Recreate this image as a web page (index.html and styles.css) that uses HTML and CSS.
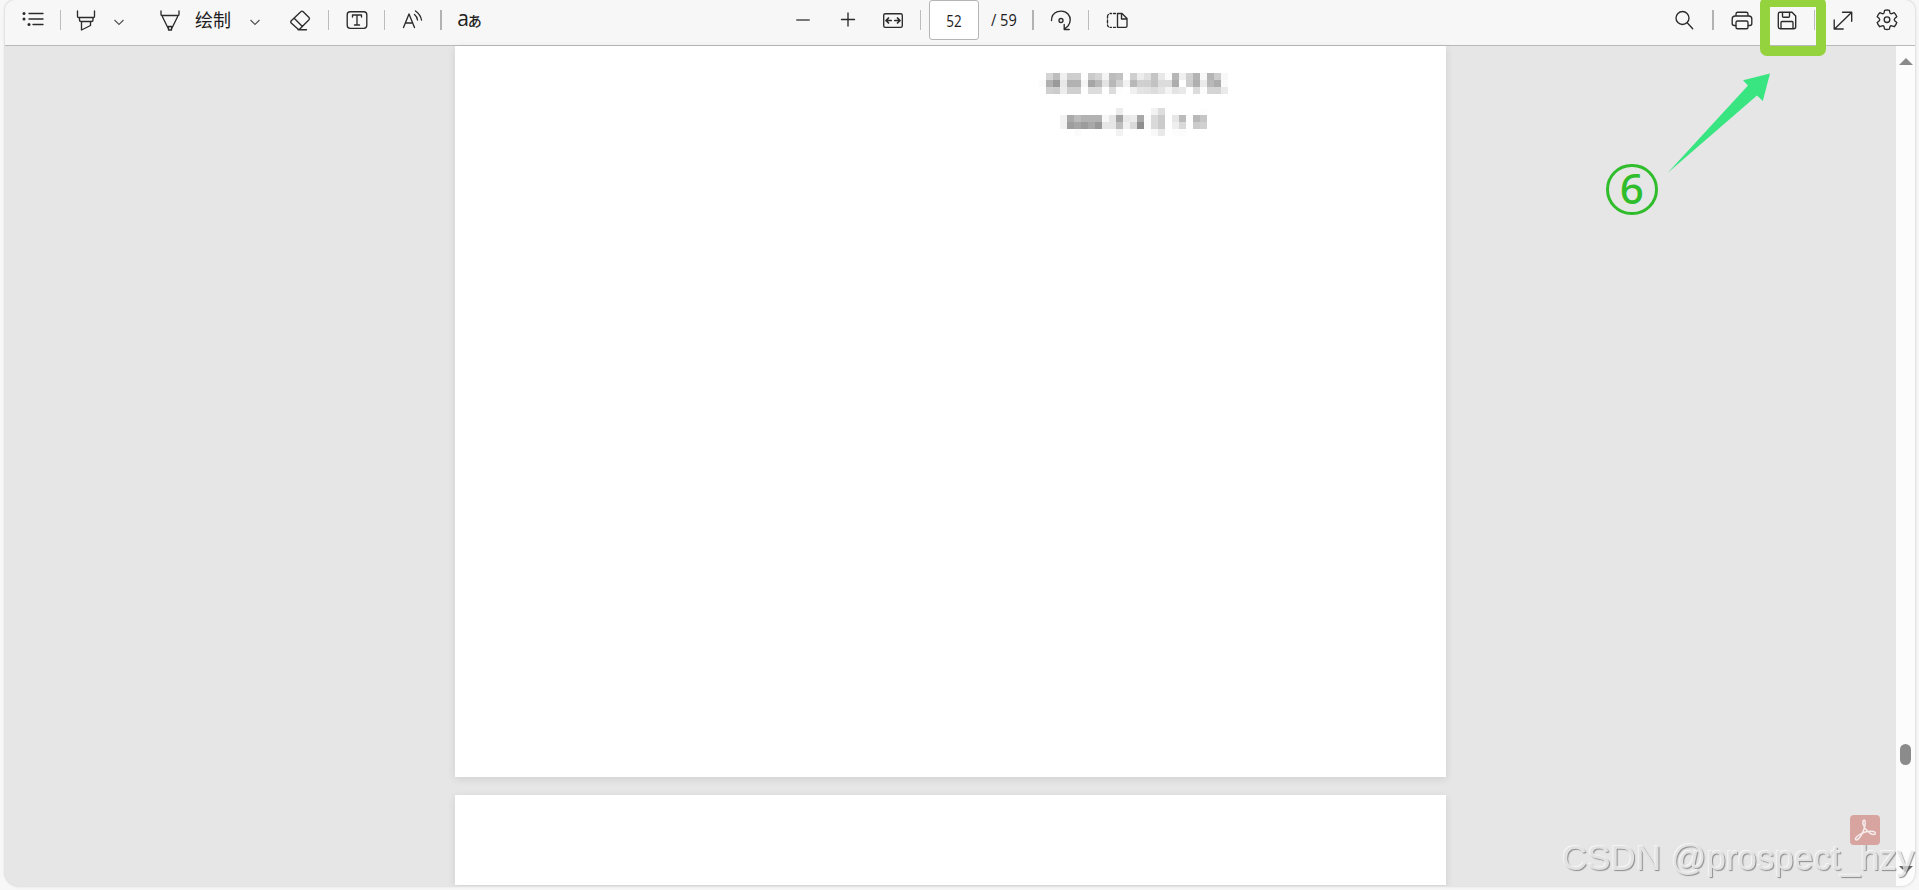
FILE: index.html
```html
<!DOCTYPE html>
<html lang="zh-CN">
<head>
<meta charset="utf-8">
<title>PDF</title>
<link rel="stylesheet" href="styles.css">
</head>
<body>
<div class="viewer">
  <header class="toolbar">
    <div class="group">
      <span class="cell w55"><svg class="icon" viewBox="0 0 24 24"><path d="M8 5.500h14M8 11h14M12 16.500h10" /><g class="solid"><circle cx="3" cy="5.500" r="1.500"/><circle cx="3" cy="11" r="1.500"/><circle cx="8" cy="16.500" r="1.500"/></g></svg></span>
      <i class="divider"></i>
      <span class="cell w50"><svg class="icon" viewBox="0 0 24 24"><path d="M3.500 3v5.500q0 1 1 1h15q1 0 1-1V3M5.500 9.500v2.500q0 1.500 1.500 1.500h10.500q1.500 0 1.500-1.500V9.500M7.500 13.500V22l9-4.500v-4"/></svg></span>
      <span class="cell w16"><svg class="chevron" viewBox="0 0 12 12"><path d="M1.500 4 6 8.500 10.500 4"/></svg></span>
      <span class="cell w50 pen"><svg class="icon" viewBox="0 0 24 24"><path d="M3 3v3.500q0 1 1 1h16q1 0 1-1V3M4.200 8.200 11 22h2l6.800-13.800M10.500 18.500h3V22h-3z"/></svg></span>
      <span class="label">绘制</span>
      <span class="cell w16 draw-menu"><svg class="chevron" viewBox="0 0 12 12"><path d="M1.500 4 6 8.500 10.500 4"/></svg></span>
      <span class="cell w56 eraser"><svg class="icon" viewBox="0 0 24 24"><path d="m3 13 9.800-9.300q1.200-1.200 2.400 0L21 9.500q1 1.200 0 2.300l-9 9q-1.200 1.100-2.400 0L3.200 15q-1-1 0-2zM6.200 10.300l8.200 8.200M10 21.700h8.500"/></svg></span>
      <i class="divider"></i>
      <span class="cell w55"><svg class="icon" viewBox="0 0 24 24"><rect x="2.200" y="3.700" width="19.600" height="16.600" rx="3"/><path d="M7.500 9V7h9v2M12 7v10M9.500 17h5"/></svg></span>
      <i class="divider"></i>
      <span class="cell w55"><svg class="icon" viewBox="0 0 24 24"><path d="M2.500 19.500 8 6l5.500 13.500M4.500 15h7M13.500 6.500q2.500 2 3 5.500M14.500 3q5 3.500 6 9"/></svg></span>
      <i class="divider thick"></i>
      <span class="cell w55 translate"><span class="latin">a</span><span class="kana">あ</span></span>
    </div>

    <div class="group center">
      <span class="cell w45"><svg class="icon" viewBox="0 0 24 24"><path class="soft" d="M6 12h12"/></svg></span>
      <span class="cell w45"><svg class="icon" viewBox="0 0 24 24"><path d="M5.500 11.500h13M12 5v13"/></svg></span>
      <span class="cell w50 fit"><svg class="icon" viewBox="0 0 24 24"><rect x="2.700" y="5.700" width="18.600" height="13.600" rx="1.600"/><path class="bold" d="M5 12.500h5.200M13.800 12.500H19M7.500 10 5 12.500 7.500 15M16.500 10l2.500 2.500-2.500 2.500"/></svg></span>
      <i class="divider"></i>
      <span class="page-number"><span class="digits">52</span></span>
      <span class="page-total"><span class="digits">/ 59</span></span>
      <i class="divider thick"></i>
      <span class="cell w54"><svg class="icon" viewBox="0 0 24 24"><path d="M2.500 12.500q0-6.500 6-8.800Q15 1.700 19 6q4.500 5.500 0 12l-3.500 3M15.200 16.500v5h5"/><circle cx="12" cy="12.500" r="2"/></svg></span>
      <i class="divider"></i>
      <span class="cell w55"><svg class="icon" viewBox="0 0 24 24"><path d="M12.500 5.500h4.500l5 5V18q0 1.300-1.300 1.300h-8.200zM16.500 5.500V11H22M10.500 5.500h-2M6.500 5.500H5M10.500 19.300h-2M6.500 19.300H5M3.500 6.500q-1 .5-1 2V10M2.500 12v3M2.500 17q0 1 1 1.700"/></svg></span>
    </div>

    <div class="group right">
      <span class="cell w56"><svg class="icon" viewBox="0 0 24 24"><circle cx="10.500" cy="10" r="6.500"/><path d="m15.200 14.800 5.500 6"/></svg></span>
      <i class="divider thick"></i>
      <span class="cell w55"><svg class="icon" viewBox="0 0 24 24"><path d="M5.700 17.500H4.200q-2 0-2-2V11q0-3 3-3h13.600q3 0 3 3v4.500q0 2-2 2h-1.500M6 8V6q0-1.800 1.800-1.800h8.400Q18 4.200 18 6v2"/><rect x="6" y="13" width="12" height="7.700" rx="1.500"/></svg></span>
      <span class="cell save"><svg class="icon" viewBox="0 0 24 24"><path d="M5 4.200h12L20.700 8v10.700q0 2-2 2H5.300q-2 0-2-2V6q0-1.800 1.700-1.800zM7.500 4.500v3.700q0 1 1 1h5q1 0 1-1V4.500M6 20.500v-6q0-1 1-1h10q1 0 1 1v6"/></svg></span>
      <i class="divider"></i>
      <span class="cell w55"><svg class="icon" viewBox="0 0 24 24"><path d="M3.500 21 20.500 4.500M11.500 4.200h9.200v9M3.200 12v9h9"/></svg></span>
      <span class="cell gear"><svg class="icon" viewBox="0 0 24 24"><circle cx="12" cy="11.700" r="2.800"/><path d="M9.600 2.300q2.400-.6 4.800 0l.6 2.700q.5 1 1.800.6l2.400-.9q1.900 1.800 2.600 4.100l-2.100 1.800q-.9 1 0 2.100l2.100 1.800q-.7 2.400-2.500 4.200l-2.500-.9q-1.300-.4-1.800.8l-.6 2.600q-2.400.6-4.800 0L9 18.600q-.5-1.200-1.800-.8l-2.500.9q-1.800-1.900-2.500-4.200l2.100-1.800q.9-1.100 0-2.100L2.200 8.800q.7-2.300 2.600-4.100l2.400.9q1.300.4 1.800-.6z"/></svg></span>
    </div>
  </header>

  <main class="workspace">
    <section class="pages">
      <article class="page first">
        <div class="mosaic" id="mosaic-name"></div>
        <div class="mosaic date" id="mosaic-date"></div>
      </article>
      <article class="page next"></article>
    </section>
    <aside class="scrollbar">
      <span class="arrow up"></span>
      <span class="thumb"></span>
      <span class="arrow down"></span>
    </aside>
  </main>
</div>

<div class="highlight"></div>
<svg class="pointer" viewBox="0 0 106 102"><path d="M.5 101 81 13.500 76 8.300 103 1.500 95.800 29 90 23.500z"/></svg>
<div class="step">6</div>
<div class="watermark">CSDN @prospect_hzy</div>
<svg class="pdf-badge" viewBox="0 0 30 30"><rect width="30" height="30" rx="4"/><path d="M13.500 5.500c-1.800 1.500.3 6.500 2.500 9 2.500 3 5.500 5 8 5 2-.2 1.700-2.600-.5-3-4-.7-10 .3-14.500 3.500-3 2-4.500 4-3 4.800 2 .8 5.500-4 7-8 1.600-4.200 3-9 1.800-11.300q-.7-.8-1.300 0z"/></svg>
<script src="mosaic.js"></script>
</body>
</html>
```
FILE: styles.css
```css
* { box-sizing: border-box; }
body {
  margin: 0;
  height: 890px;
  overflow: hidden;
  position: relative;
  background: #f7f7f7;
  font-family: "Open Sans", "Noto Sans CJK SC", sans-serif;
  color: #202020;
}
.viewer {
  height: 886px;
  margin: 0 4px 0 5px;
  display: flex;
  flex-direction: column;
  border-radius: 10px 10px 14px 14px;
  overflow: hidden;
  background: #e6e6e6;
  box-shadow: 0 0 3px rgba(0, 0, 0, .22);
}
.toolbar {
  height: 46px;
  flex: none;
  display: flex;
  align-items: flex-start;
  background: #f7f7f7;
  border-bottom: 1px solid #b9b9b9;
}
.group { display: flex; align-items: center; height: 40px; flex: none; }
.center { margin-left: 283px; }
.right { margin-left: 512px; }
.cell { display: flex; align-items: center; justify-content: center; flex: none; height: 40px; }
.w16 { width: 16px; }
.w45 { width: 45px; }
.w50 { width: 50px; }
.w54 { width: 54px; }
.w55 { width: 55px; }
.w56 { width: 56px; }
.pen { margin-left: 18px; }
.draw-menu { margin-left: 16px; }
.eraser { margin-left: 9px; }
.fit { width: 46px; margin-right: 4px; }
.save { width: 36px; margin-right: 9px; }
.gear { width: 34px; }
.divider { width: 1px; height: 20px; background: #bcbcbc; flex: none; }
.thick { width: 2px; background: #b2b2b2; }
.icon { width: 24px; height: 24px; fill: none; stroke: #2b2b2b; stroke-width: 1.35; stroke-linejoin: round; stroke-linecap: round; }
.icon .solid { fill: #2b2b2b; stroke: none; }
.icon .soft { stroke: #777; stroke-width: 2; }
.icon .bold { stroke-width: 1.7; }
.chevron { width: 12px; height: 12px; margin-top: 3px; fill: none; stroke: #555; stroke-width: 1.2; }
.label { width: 36px; font: 18px/38px "Noto Sans CJK SC", sans-serif; white-space: nowrap; height: 40px; }
.translate { white-space: nowrap; }
.latin { font: 21px/37px "Open Sans", sans-serif; height: 40px; margin-right: -1px; }
.kana { font: 500 14px/40px "Noto Sans CJK JP", sans-serif; }
.page-number {
  width: 50px;
  height: 40px;
  margin-left: 8px;
  border: 1px solid #b5b5b5;
  border-radius: 3px;
  background: #fff;
  text-align: center;
  font-size: 14px;
  line-height: 39px;
}
.page-total { width: 41px; margin: 0 0 0 12px; font-size: 14px; line-height: 40px; white-space: nowrap; }
.digits { display: inline-block; transform: scale(.96, 1.12); }
.page-total .digits { transform: scale(1.04, 1.12); transform-origin: 0 50%; }
.workspace { flex: 1; min-height: 0; display: flex; justify-content: space-between; }
.pages { width: 991px; margin-left: 450px; display: flex; flex-direction: column; gap: 18px; }
.page { background: #fff; box-shadow: 0 2px 8px rgba(0, 0, 0, .1); }
.first { height: 731px; flex: none; padding: 27px 0 0 584px; }
.next { flex: none; height: 90px; }
.mosaic { display: grid; grid-template-columns: repeat(27, 7px); grid-auto-rows: 7px; }
.date { margin-top: 14px; }
.scrollbar { width: 19px; background: #fcfcfc; display: flex; flex-direction: column; align-items: center; padding-top: 12px; }
.arrow { border: 7px solid transparent; border-top: 0; border-bottom: 7px solid #8a8a8a; }
.thumb { width: 11px; height: 21px; margin-top: 679px; border-radius: 5.5px; background: #8b8b8b; }
.down { margin-top: 101px; border-top: 7px solid #666; border-bottom: 0; }
.highlight {
  position: absolute;
  left: 1760px;
  top: -3px;
  width: 66px;
  height: 59px;
  border: 10px solid #94d33d;
  border-radius: 7px;
}
.pointer { position: absolute; left: 1667px; top: 72px; width: 106px; height: 102px; fill: #39e580; }
.step {
  position: absolute;
  left: 1606px;
  top: 163.5px;
  width: 51.5px;
  height: 51.5px;
  border: 3.5px solid #2fbd2b;
  border-radius: 50%;
  color: #2fbd2b;
  text-align: center;
  font: 500 42px/42px "Noto Sans", sans-serif;
}
.pdf-badge { position: absolute; left: 1850px; top: 815px; width: 30px; height: 30px; fill: #d8a4a0; }
.pdf-badge path { fill: none; stroke: #f5eceb; stroke-width: 1.5; }
.watermark {
  position: absolute;
  left: 1562px;
  top: 838px;
  font: 35px/40px "Liberation Sans", sans-serif;
  white-space: nowrap;
  color: #e0e0e0;
  opacity: .75;
  will-change: transform;
  text-shadow: -1px -1px 0 #fafafa, 1px 1px 1px rgba(80, 80, 80, .8);
}
```
FILE: mosaic.js
```js
// Each pair of hex digits is the grey level of one 7px tile.
const rows = {
  "mosaic-name": [
    "ff d5 bd f0 ce ce fe ca d4 f4 bc c2 fe cf ec e0 c4 e8 fb b6 f0 d0 b3 f8 b4 cc f8",
    "fb b0 99 e8 b2 b2 f6 a6 b8 e4 b8 d2 f2 b8 d0 cf c2 dc dc ad ff cc b0 eb b8 ac fa",
    "ff d0 cc ec cf cf ff dc dc ff dc fd ff f0 e4 e2 dc e4 f4 e4 e9 ff dc fc d4 d4 ea"
  ],
  "mosaic-date": [
    "ff ff ff ff ff ff ff ff ff ff ff ec ff ff ff ff f2 dd ff ff ff ff ff fd ff ff ff",
    "ff ff ff f2 aa bc b2 b2 b2 f8 e6 a4 e9 ec a8 fc d9 cb ff e6 bb fd b8 c6 ff ff ff",
    "ff ff ff f2 9e a6 9c a8 98 e6 e6 bd f0 da 8e fc d9 cb ff ee d9 fd cb d0 ff ff ff",
    "ff ff ff ff ff fb ff ff ff ff ff f2 ff ff ff ff f8 e9 ff fd fc ff ff ff ff ff ff"
  ]
};
for (const [id, lines] of Object.entries(rows)) {
  const box = document.getElementById(id);
  for (const level of lines.join(" ").split(" ")) {
    const tile = document.createElement("span");
    tile.style.background = "#" + level.repeat(3);
    box.append(tile);
  }
}
```
